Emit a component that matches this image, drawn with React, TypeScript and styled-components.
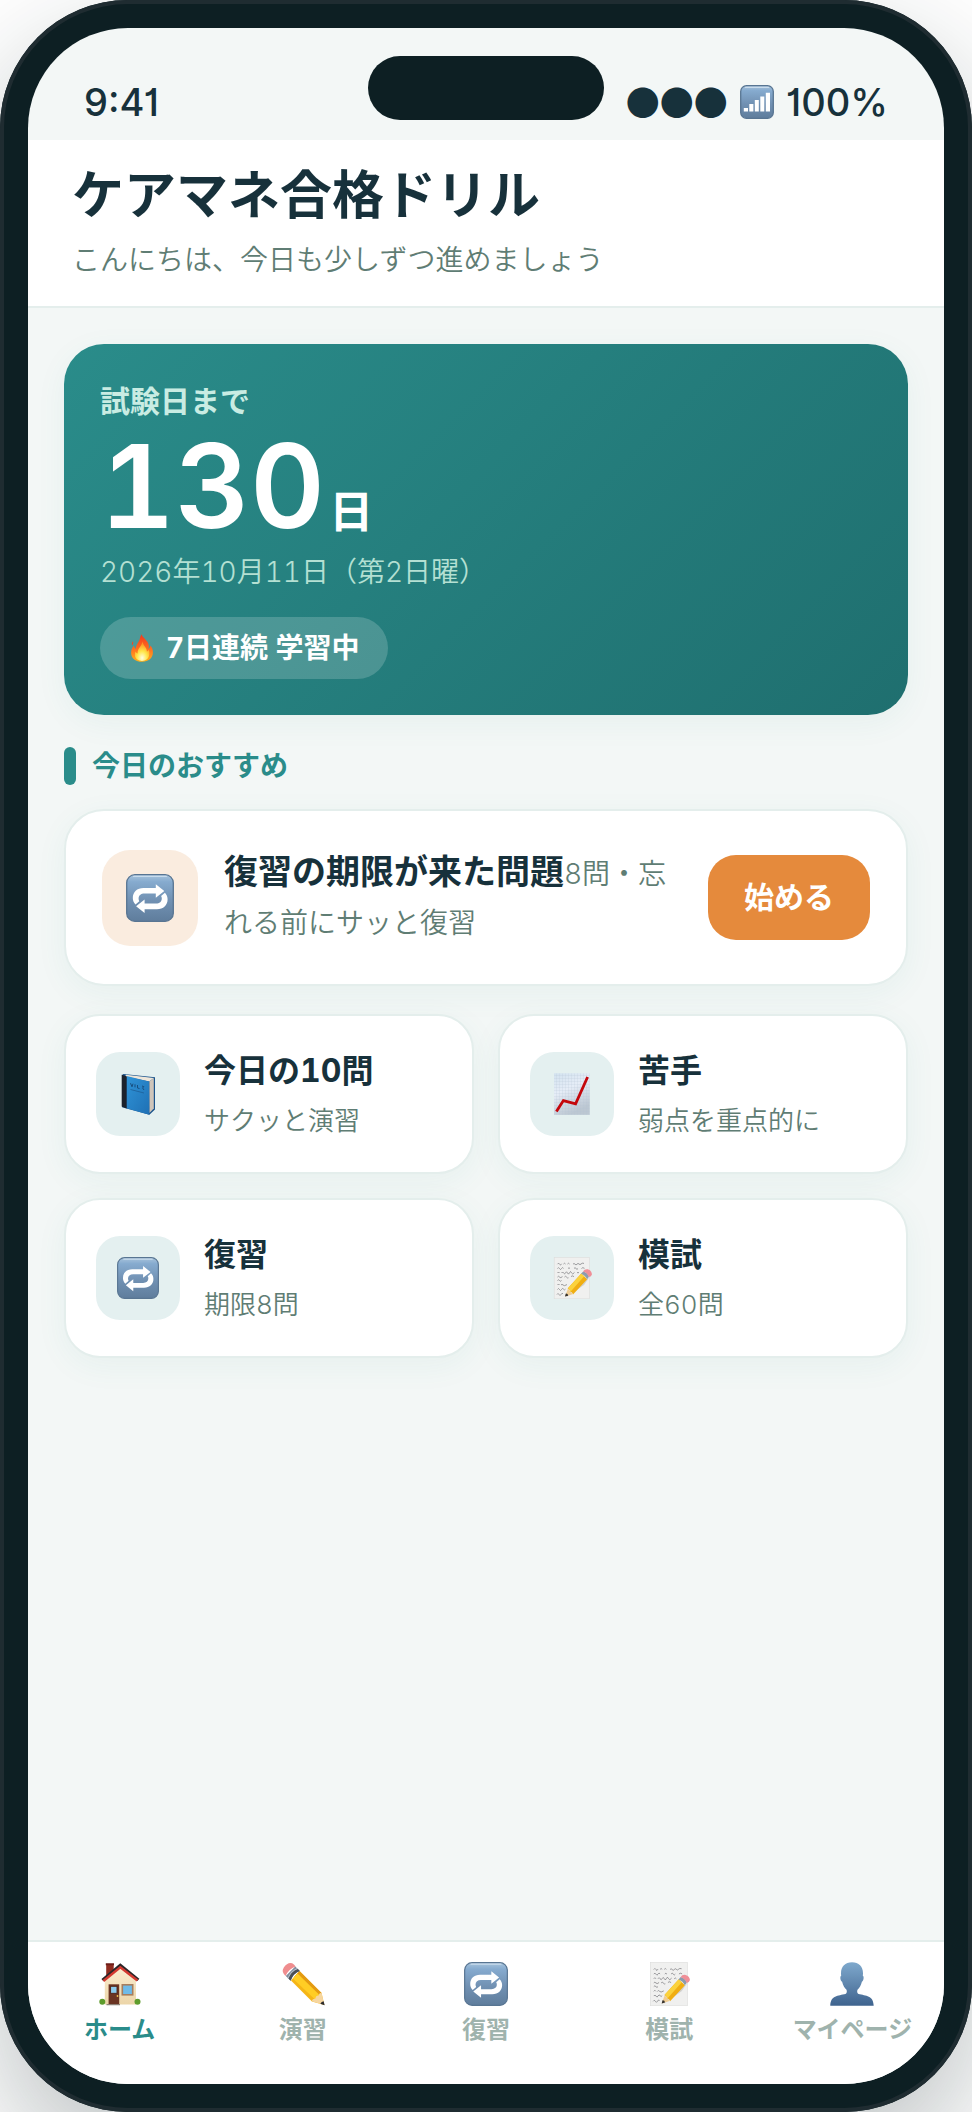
import React from "react";
import styled, { createGlobalStyle } from "styled-components";

const color = {
  ink: "#17313b",
  frame: "#0d1f23",
  ring: "#1f2c31",
  screen: "#f3f7f6",
  line: "#e4eeec",
  muted: "#5f7d74",
  faint: "#9fb3ad",
  teal: "#2a8c8a",
  orange: "#e58a3c",
};

const GlobalStyle = createGlobalStyle`
  *, *::before, *::after { box-sizing: border-box; }
  body {
    margin: 0;
    background: #fff;
    color: ${color.ink};
    font-family: Inter, "Noto Sans CJK JP", sans-serif;
    font-variant-numeric: tabular-nums;
  }
  button { font: inherit; color: inherit; border: 0; margin: 0; cursor: pointer; }
  h1, h2, p { margin: 0; }
`;

/* ---------- pictograms ---------- */

const Svg = styled.svg`
  display: block;
  flex: none;
`;

type IconProps = { size: number };

const BlueKey = ({ id, size }: { id: string; size: number }) => (
  <>
    <defs>
      <linearGradient id={id} x1="0" y1="0" x2="0" y2="1">
        <stop offset="0" stopColor="#a9c4dc" />
        <stop offset="0.15" stopColor="#86abcf" />
        <stop offset="0.55" stopColor="#7191b3" />
        <stop offset="1" stopColor="#5f7d9c" />
      </linearGradient>
    </defs>
    <rect x="0.7" y="0.7" width={size - 1.4} height={size - 1.4} rx={size * 0.17} fill={`url(#${id})`} stroke="#587592" strokeWidth="1.3" />
    <path d={`M${size * 0.16} 2.4H${size * 0.84}`} stroke="#d3e4f1" strokeWidth="1.4" strokeLinecap="round" opacity="0.8" />
  </>
);

const RepeatIcon = ({ size }: IconProps) => {
  const id = React.useId().replace(/[^a-zA-Z0-9]/g, "");
  const arrow = "M9.5 30.5C7.7 28.6 6.8 26.6 6.8 24C6.8 18 11 14 17.5 14H29.8V10.2L38.3 17L29.8 23.8V19.6H18.5C14.8 19.6 12.6 21.6 12.6 24.6C12.6 25.6 12.8 26.4 13.3 27.2Z";
  return (
    <Svg width={size} height={size} viewBox="0 0 48 48" aria-hidden="true">
      <BlueKey id={id} size={48} />
      <path d={arrow} fill="#fff" />
      <path d={arrow} fill="#fff" transform="rotate(180 24.2 24.6)" />
    </Svg>
  );
};

const SignalIcon = ({ size }: IconProps) => (
  <Svg width={size} height={size} viewBox="0 0 34 34" aria-hidden="true">
    <BlueKey id="signalKey" size={34} />
    <path d="M3.8 23H8V26.6H3.8ZM9.3 19H13.4V26.6H9.3ZM14.8 15H18.8V26.6H14.8ZM20.3 11.5H24.3V26.6H20.3ZM25.8 7.8H30V26.6H25.8Z" fill="#fff" />
  </Svg>
);

const FireIcon = ({ size }: IconProps) => (
  <Svg width={size} height={size} viewBox="0 0 28 28" aria-hidden="true">
    <defs>
      <linearGradient id="flame" x1="0" y1="0" x2="0" y2="1">
        <stop offset="0" stopColor="#f0391e" />
        <stop offset="0.5" stopColor="#ff6a1f" />
        <stop offset="1" stopColor="#ffb21c" />
      </linearGradient>
      <radialGradient id="flameCore" cx="0.5" cy="0.85" r="0.7">
        <stop offset="0" stopColor="#fffde0" />
        <stop offset="0.5" stopColor="#ffe74a" />
        <stop offset="1" stopColor="#ff9a26" />
      </radialGradient>
    </defs>
    <path d="M13.8 0.3C14 3.6 20 6.2 20.8 11.3C21 12.8 20.8 14 20.5 15C21.8 14.2 22.3 12.8 22.3 11.6C24.2 13.4 25 16 24.9 18.8C24.8 24 20.4 27.8 14.2 27.8C7.8 27.8 3.2 24.2 3.1 18.9C3 16 4.2 13.4 6 11.6C6.2 13.2 6.8 14.3 7.9 14.8C8 10.5 10.8 8.6 11.6 5.6C12.1 3.8 12.4 2 13.8 0.3Z" fill="url(#flame)" />
    <path d="M4.2 11.5C3.4 10 3.8 8.4 5 7.3C5.4 8.6 5.3 10 4.2 11.5Z" fill="#f04a22" />
    <path d="M14.6 7.5C14.6 11.5 19 13 18.9 17.5C19.8 17.3 20.4 16.6 20.8 15.8C22 19 22 26.8 14 26.9C6.9 26.8 6 21.5 7.5 17.6C8 18.8 8.7 19.4 9.6 19.5C9.2 14.4 13.6 12.5 14.6 7.5Z" fill="url(#flameCore)" />
  </Svg>
);

const BookIcon = ({ size }: IconProps) => (
  <Svg width={size} height={size} viewBox="0 0 42 42" aria-hidden="true">
    <defs>
      <linearGradient id="cover" x1="0" y1="0" x2="1" y2="1">
        <stop offset="0" stopColor="#2f94d8" />
        <stop offset="1" stopColor="#1f70b4" />
      </linearGradient>
    </defs>
    <path d="M6.5 1L38 4.2V36.6L32.4 41.8L5 34.2V2Z" fill="#1b548c" />
    <path d="M9 1.7L36.8 5L32.4 8.5L8 3.5Z" fill="#eee6da" />
    <path d="M32.4 8.5L36.8 5V35.6L32.4 40Z" fill="#cfc5ba" />
    <path d="M9.6 3L32 8.4L32.3 41.8L9.6 35.3Z" fill="url(#cover)" />
    <path d="M4.7 1.8L9.6 3.3V35.4L4.7 33.4Z" fill="#1c222c" />
    <path d="M13.5 10.2L15 13.8L16 10.7M18 11.3V14.3M20.5 12V15L22.5 15.5M25 13L26.8 13.6L25.6 15L27 17" fill="none" stroke="#174f80" strokeWidth="1" />
    <path d="M13.5 16.5L27 20" stroke="#1d5f98" strokeWidth="0.8" />
  </Svg>
);

const ChartIcon = ({ size }: IconProps) => (
  <Svg width={size} height={size} viewBox="0 0 42 42" aria-hidden="true">
    <defs>
      <linearGradient id="sheet" x1="0" y1="0" x2="0.4" y2="1">
        <stop offset="0" stopColor="#d2e2ef" />
        <stop offset="0.45" stopColor="#e6edf7" />
        <stop offset="1" stopColor="#bcc7d2" />
      </linearGradient>
      <pattern id="sheetGrid" width="3" height="3" patternUnits="userSpaceOnUse">
        <path d="M3 0V3H0" fill="none" stroke="#b4c4d3" strokeWidth="0.4" />
      </pattern>
    </defs>
    <rect x="3" y="0.3" width="35.7" height="41.5" fill="url(#sheet)" />
    <rect x="3" y="0.3" width="35.7" height="41.5" fill="url(#sheetGrid)" />
    <path d="M5.4 38.6L12.4 27.6L24.6 30.9L36.6 4" fill="none" stroke="#c4070c" strokeWidth="2.8" />
  </Svg>
);

const MemoIcon = ({ size }: IconProps) => (
  <Svg width={size} height={size} viewBox="0 0 42 42" aria-hidden="true">
    <rect x="3.2" y="0.4" width="35.4" height="41.4" fill="#f0f0ef" stroke="#dcdcdb" strokeWidth="0.6" />
    <g fill="none" stroke="#77777b" strokeWidth="0.7">
      <path d="M6.5 7.2q1-2 2 0t2-.4M12.5 7q1-1.5 2 0M16.5 7q1-1.5 2 0M22 7.2q1-1.5 2 0t2 0 2-.2 2 0 3-.6" />
      <path d="M6.5 11.6q1-2 2 0t2 0 2-.2M17 11.5q1-1.5 2 0M23 11.5q1-1.8 2 0t2 0M30.5 11.5q1-1.5 3-.2" />
      <path d="M6.5 16q1-2 2 0M10.5 16q1-2 2 0t2-.2 2 .2 2-.2 2 0 3-.4M26 16q1-1.5 2 0" />
      <path d="M6.5 20q1-1.5 2 0t3-.4M13.5 20q1-1.5 2 0t2 .8M20 19.6q1-1.5 3 0" />
      <path d="M6.5 23.5q1-1.5 2 0t2 0M6.5 28q1-2 2 0M10 28q1-1.5 2 0t4-.4" />
      <path d="M6.5 32.5q1-2 2 0t2 0 2-.4 2 0M6 37.5q1-2 2 0t2 0 2-.8" />
    </g>
    <path d="M15 40.6L38 20.5L41 16.6L33 28Z" fill="#8c8c90" opacity="0.3" />
    <path d="M14 39.5L17 31.4L21.5 37.2Z" fill="#f0cd94" />
    <path d="M14 39.6L14.8 36.6Q17 36.5 17.2 38.7Z" fill="#35322f" />
    <path d="M16.6 31.6L30.3 16.5L36.2 22.2L22 37.4Q21.5 35 19.5 34.8Q19 32.2 16.6 31.6Z" fill="#f0ae12" />
    <path d="M17 31.2L30.3 16.5L33.2 19.3L19.5 34.8Q19 32.2 17 31.2Z" fill="#fbd23c" />
    <path d="M30 16.8L32.2 14.4Q36.5 15.2 38 19.8L36 22.3Q34.5 18.5 30 16.8Z" fill="#8b9cae" />
    <path d="M32 14.6Q33.5 11.8 36.8 12.3Q40.6 13.4 41 17.2Q40.4 19.6 38 20Q36 15.6 32 14.6Z" fill="#ef8f98" />
  </Svg>
);

const HouseIcon = ({ size }: IconProps) => (
  <Svg width={size} height={size} viewBox="0 0 44 44" aria-hidden="true">
    <defs>
      <linearGradient id="wall" x1="0" y1="0" x2="0" y2="1">
        <stop offset="0" stopColor="#fbeed2" />
        <stop offset="1" stopColor="#ecd5a8" />
      </linearGradient>
    </defs>
    <path d="M8.2 2H15.7V12L8.2 18Z" fill="#8f2c20" />
    <path d="M7.8 1.3H16V3.3H7.8Z" fill="#6d1d18" />
    <path d="M6.8 17L22.3 4.6L38 17V42.6H6.8Z" fill="url(#wall)" />
    <path d="M4.4 18.2L22.3 3.2L40.4 17.8" fill="none" stroke="#2a2628" strokeWidth="3" />
    <path d="M5.4 19L22.3 5.2L39.4 18.5" fill="none" stroke="#d33a31" strokeWidth="2.4" />
    <rect x="10.6" y="22.3" width="10.6" height="20" fill="#6b3423" />
    <rect x="12.6" y="24.3" width="6.4" height="7" fill="#8ccbee" stroke="#4c2218" strokeWidth="0.9" />
    <circle cx="19.5" cy="34" r="0.9" fill="#f2c14c" />
    <rect x="24.3" y="22.8" width="10.4" height="10" fill="#6fbbe8" stroke="#a77e5d" strokeWidth="1.6" />
    <path d="M8.5 42H22V43.2H8.5Z" fill="#8d8177" />
    <circle cx="4.3" cy="39.8" r="3" fill="#5e9c2c" />
    <circle cx="39.5" cy="39.8" r="3" fill="#5e9c2c" />
  </Svg>
);

const PencilIcon = ({ size }: IconProps) => (
  <Svg width={size} height={size} viewBox="0 0 44 44" aria-hidden="true">
    <path d="M10 18.5L18.5 9L40.5 31L43.4 43L31 39.4Z" fill="#f5b517" />
    <path d="M13.3 14.8L18.5 9L40.5 31L37 35.5Z" fill="#e39a12" />
    <path d="M11.8 16.6L16.5 11.4L38.8 33.2L34 37.6Z" fill="#ffcd24" />
    <path d="M30.5 39.3Q31.5 36.5 34.5 36.6Q34.6 33.5 37.6 33.4Q38 31 40.5 30.8L43.4 43Z" fill="#f6d6a0" />
    <path d="M39.3 41.8Q40.5 39.4 42.6 39.2L43.6 43.3Z" fill="#2b2b2d" />
    <path d="M4.8 14L14.3 4.4L18.8 9Q12 11.5 9.6 18.8Z" fill="#7f8c9c" />
    <path d="M7.2 16.4Q10 9.5 16.5 6.7" fill="none" stroke="#b8c3cf" strokeWidth="1.3" />
    <path d="M9.6 18.8L7.5 16.6Q10 9.5 16.9 7L18.8 9Q12 11.5 9.6 18.8Z" fill="#4a4e56" />
    <path d="M4.6 13.9Q0 10 2.8 5.6Q6.5 0 11.2 1.3Q13.5 2.5 14.6 4.6Q7.8 7 4.6 13.9Z" fill="#ef8d8f" />
  </Svg>
);

const PersonIcon = ({ size }: IconProps) => (
  <Svg width={size} height={size} viewBox="0 0 44 44" aria-hidden="true">
    <defs>
      <linearGradient id="bust" x1="0" y1="0" x2="0" y2="1">
        <stop offset="0" stopColor="#7fa9cd" />
        <stop offset="1" stopColor="#3f638e" />
      </linearGradient>
    </defs>
    <path d="M22 0.3C28.8 0.3 33 4.5 33 11.3C33 12.3 32.9 13 32.8 13.8C34.2 14 33.8 19 31.9 19.7C31 23.5 29.5 25.8 27.5 27.8C26.8 29.5 27.2 31.5 28.5 32C36 33.8 43.5 33.5 43.7 43.8H0.3C0.5 33.5 8 33.8 15.5 32C16.8 31.5 17.2 29.5 16.5 27.8C14.5 25.8 13 23.5 12.1 19.7C10.2 19 9.8 14 11.2 13.8C11.1 13 11 12.3 11 11.3C11 4.5 15.2 0.3 22 0.3Z" fill="url(#bust)" />
  </Svg>
);

/* ---------- device ---------- */

const Device = styled.div`
  position: relative;
  display: flex;
  min-height: 100vh;
  padding: 28px;
  border-radius: 128px;
  background: ${color.frame};
  box-shadow: inset 0 0 0 4px ${color.ring}, 0 48px 120px rgba(13, 31, 35, 0.28);
`;

const Screen = styled.div`
  flex: 1;
  min-width: 0;
  display: flex;
  flex-direction: column;
  overflow: hidden;
  border-radius: 100px;
  background: ${color.screen};
`;

const Island = styled.div`
  position: absolute;
  top: 56px;
  left: 50%;
  width: 236px;
  height: 64px;
  margin-left: -118px;
  border-radius: 32px;
  background: ${color.frame};
`;

const StatusBar = styled.div`
  display: flex;
  justify-content: space-between;
  height: 112px;
  padding: 48px 56px 12px;
  font-size: 38px;
  line-height: 52px;
  font-weight: 500;
  font-variant-numeric: normal;
  font-feature-settings: "cv01";
`;

const StatusRight = styled.div`
  display: flex;
  align-items: center;
  gap: 12px;
`;

const Dots = styled.span`
  font-family: "Noto Sans CJK JP", sans-serif;
  font-size: 34px;
`;

/* ---------- header ---------- */

const Header = styled.header`
  padding: 25px 44px;
  background: #fff;
  border-bottom: 2px solid ${color.line};
`;

const Title = styled.h1`
  font-size: 52px;
  line-height: 62px;
  font-weight: 700;
`;

const Greeting = styled.p`
  margin-top: 12px;
  font-size: 28px;
  line-height: 42px;
  font-weight: 350;
  color: ${color.muted};
`;

/* ---------- body ---------- */

const Main = styled.main`
  flex: 1;
  padding: 36px;
`;

const Hero = styled.section`
  display: flex;
  flex-direction: column;
  align-items: flex-start;
  padding: 36px;
  border-radius: 40px;
  color: #fff;
  background: linear-gradient(135deg, ${color.teal} 0%, #1f6f6f 100%);
  box-shadow: 0 8px 32px rgba(42, 140, 120, 0.06);
`;

const HeroLabel = styled.p`
  font-size: 30px;
  line-height: 43px;
  font-weight: 700;
  color: #c9ece3;
`;

const Countdown = styled.p`
  display: flex;
  align-items: baseline;
  gap: 4px;
  font-size: 116px;
  line-height: 126px;
  font-weight: 600;
`;

const Unit = styled.span`
  font-size: 44px;
  line-height: 64px;
  font-weight: 700;
`;

const HeroDate = styled.p`
  margin-top: 2px;
  font-size: 28px;
  line-height: 42px;
  font-weight: 350;
  color: #b4e0d3;
`;

const Streak = styled.div`
  display: flex;
  align-items: center;
  gap: 10px;
  margin-top: 24px;
  padding: 10px 28px;
  border-radius: 31px;
  background: rgba(255, 255, 255, 0.18);
  font-size: 28px;
  line-height: 42px;
  font-weight: 700;
`;

const SectionTitle = styled.h2`
  display: flex;
  align-items: center;
  gap: 16px;
  margin: 32px 0 24px;
  font-size: 28px;
  line-height: 38px;
  font-weight: 700;
  color: ${color.teal};

  &::before {
    content: "";
    width: 12px;
    height: 38px;
    border-radius: 6px;
    background: ${color.teal};
  }
`;

const Card = styled.div`
  display: flex;
  align-items: center;
  border: 2px solid ${color.line};
  background: #fff;
  box-shadow: 0 8px 32px rgba(42, 140, 120, 0.06);
`;

const Recommendation = styled(Card)`
  gap: 26px;
  padding: 36px;
  border-radius: 40px;
`;

const IconTile = styled.span<{ $size: number; $tone: "peach" | "mint" }>`
  display: flex;
  flex: none;
  align-items: center;
  justify-content: center;
  width: ${(p) => p.$size}px;
  height: ${(p) => p.$size}px;
  border-radius: ${(p) => (p.$tone === "peach" ? 28 : 24)}px;
  background: ${(p) => (p.$tone === "peach" ? "#faecdf" : "#e4f0f0")};
`;

const RecommendationText = styled.p`
  flex: 1;
  min-width: 0;
  font-size: 28px;
  line-height: 49px;
  font-weight: 350;
  color: ${color.muted};

  strong {
    font-size: 34px;
    font-weight: 700;
    color: ${color.ink};
  }
`;

const StartButton = styled.button`
  flex: none;
  && {
    padding: 21px 36px;
    border-radius: 28px;
    background: ${color.orange};
    color: #fff;
    font-size: 30px;
    line-height: 43px;
    font-weight: 700;
  }
`;

const Grid = styled.div`
  display: grid;
  grid-template-columns: 1fr 1fr;
  gap: 24px;
  margin-top: 28px;
`;

const MenuCard = styled(Card).attrs({ as: "button", type: "button" })`
  && {
    gap: 24px;
    padding: 32px 30px;
    border: 2px solid ${color.line};
    border-radius: 36px;
    text-align: left;
  }
`;

const MenuText = styled.span`
  display: flex;
  flex-direction: column;
  gap: 8px;
`;

const MenuTitle = styled.span`
  font-size: 32px;
  line-height: 46px;
  font-weight: 700;
  color: ${color.ink};
`;

const MenuNote = styled.span`
  font-size: 26px;
  line-height: 38px;
  font-weight: 350;
  color: ${color.muted};
`;

/* ---------- tab bar ---------- */

const TabBar = styled.nav`
  display: grid;
  grid-template-columns: repeat(5, 1fr);
  padding: 20px 0 36px;
  border-top: 2px solid ${color.line};
  background: #fff;
`;

const Tab = styled.a<{ $active: boolean }>`
  display: flex;
  flex-direction: column;
  align-items: center;
  gap: 6px;
  min-height: 86px;
  font-size: 24px;
  line-height: 36px;
  font-weight: 700;
  white-space: nowrap;
  text-decoration: none;
  color: ${(p) => (p.$active ? color.teal : color.faint)};
`;

const menu = [
  { title: "今日の10問", note: "サクッと演習", Icon: BookIcon },
  { title: "苦手", note: "弱点を重点的に", Icon: ChartIcon },
  { title: "復習", note: "期限8問", Icon: RepeatIcon },
  { title: "模試", note: "全60問", Icon: MemoIcon },
];

const tabs = [
  { label: "ホーム", Icon: HouseIcon },
  { label: "演習", Icon: PencilIcon },
  { label: "復習", Icon: RepeatIcon },
  { label: "模試", Icon: MemoIcon },
  { label: "マイページ", Icon: PersonIcon },
];

export default function App() {
  return (
    <>
      <GlobalStyle />
      <Device lang="ja">
        <Screen>
          <StatusBar>
            <span>9:41</span>
            <StatusRight>
              <Dots>●●●</Dots>
              <SignalIcon size={34} />
              <span>100%</span>
            </StatusRight>
          </StatusBar>
          <Header>
            <Title>ケアマネ合格ドリル</Title>
            <Greeting>こんにちは、今日も少しずつ進めましょう</Greeting>
          </Header>
          <Main>
            <Hero>
              <HeroLabel>試験日まで</HeroLabel>
              <Countdown>
                130<Unit>日</Unit>
              </Countdown>
              <HeroDate>2026年10月11日（第2日曜）</HeroDate>
              <Streak>
                <FireIcon size={28} />
                7日連続 学習中
              </Streak>
            </Hero>
            <SectionTitle>今日のおすすめ</SectionTitle>
            <Recommendation>
              <IconTile $size={96} $tone="peach">
                <RepeatIcon size={48} />
              </IconTile>
              <RecommendationText>
                <strong>復習の期限が来た問題</strong>8問・忘れる前にサッと復習
              </RecommendationText>
              <StartButton type="button">始める</StartButton>
            </Recommendation>
            <Grid>
              {menu.map(({ title, note, Icon }) => (
                <MenuCard key={title}>
                  <IconTile $size={84} $tone="mint">
                    <Icon size={42} />
                  </IconTile>
                  <MenuText>
                    <MenuTitle>{title}</MenuTitle>
                    <MenuNote>{note}</MenuNote>
                  </MenuText>
                </MenuCard>
              ))}
            </Grid>
          </Main>
          <TabBar aria-label="メインメニュー">
            {tabs.map(({ label, Icon }, i) => (
              <Tab key={label} href="#" $active={i === 0} aria-current={i === 0 ? "page" : undefined}>
                <Icon size={44} />
                {label}
              </Tab>
            ))}
          </TabBar>
        </Screen>
        <Island />
      </Device>
    </>
  );
}
